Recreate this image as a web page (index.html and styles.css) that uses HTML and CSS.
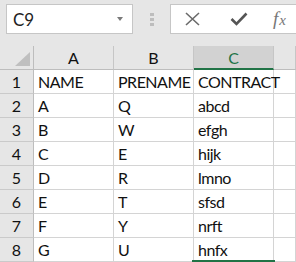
FILE: index.html
```html
<!DOCTYPE html>
<html lang="en">
  <head>
    <meta charset="UTF-8" />
    <title>Sheet</title>
    <link rel="stylesheet" href="styles.css">
  </head>
  <body>
    <div class="toolbar">
      <div class="namebox">
        <span class="ref">C9</span>
        <span class="caret"></span>
      </div>
      <div class="grip"><i></i><i></i><i></i></div>
      <div class="formula">
        <svg class="cancel" width="15" height="14" viewBox="0 0 15 14">
          <path d="M1 1 L14 13 M14 1 L1 13" stroke="#6a6a6a" stroke-width="1.6" fill="none" />
        </svg>
        <svg class="enter" width="18" height="14" viewBox="0 0 18 14">
          <path d="M1.5 7 L6.5 12 L16.5 1.5" stroke="#555" stroke-width="2.6" fill="none" />
        </svg>
        <span class="fx">f<span class="x">x</span></span>
      </div>
    </div>

    <div class="sheet">
      <div class="corner"><span class="tri"></span></div>
      <div class="col">A</div>
      <div class="col">B</div>
      <div class="col active">C</div>
      <div class="col"></div>

      <div class="row">1</div>
      <div class="cell">NAME</div>
      <div class="cell">PRENAME</div>
      <div class="cell">CONTRACT</div>
      <div class="cell"></div>

      <div class="row">2</div>
      <div class="cell">A</div>
      <div class="cell">Q</div>
      <div class="cell">abcd</div>
      <div class="cell"></div>

      <div class="row">3</div>
      <div class="cell">B</div>
      <div class="cell">W</div>
      <div class="cell">efgh</div>
      <div class="cell"></div>

      <div class="row">4</div>
      <div class="cell">C</div>
      <div class="cell">E</div>
      <div class="cell">hijk</div>
      <div class="cell"></div>

      <div class="row">5</div>
      <div class="cell">D</div>
      <div class="cell">R</div>
      <div class="cell">lmno</div>
      <div class="cell"></div>

      <div class="row">6</div>
      <div class="cell">E</div>
      <div class="cell">T</div>
      <div class="cell">sfsd</div>
      <div class="cell"></div>

      <div class="row">7</div>
      <div class="cell">F</div>
      <div class="cell">Y</div>
      <div class="cell">nrft</div>
      <div class="cell"></div>

      <div class="row">8</div>
      <div class="cell">G</div>
      <div class="cell">U</div>
      <div class="cell above-selected">hnfx</div>
      <div class="cell"></div>
    </div>
  </body>
</html>
```

FILE: styles.css
```css
* {
  margin: 0;
  padding: 0;
  box-sizing: border-box;
}

body {
  font-family: Lato, "Liberation Sans", Arial, sans-serif;
  font-size: 16px;
  color: #111;
  background-color: #e6e6e6;
  width: 296px;
  height: 262px;
  overflow: hidden;
}

/* name box + formula bar */
.toolbar {
  display: flex;
  align-items: flex-start;
  height: 46px;
  padding: 4px 0 0 6px;
}

.namebox {
  display: flex;
  align-items: center;
  justify-content: space-between;
  width: 127px;
  height: 30px;
  padding: 0 9px 0 6px;
  background-color: #fff;
  border: 1px solid #c6c6c6;
}

.ref {
  color: #222;
  font-size: 17px;
  padding-top: 1px;
}

.caret {
  width: 0;
  height: 0;
  border-top: 4px solid #7a7a7a;
  border-left: 3.5px solid transparent;
  border-right: 3.5px solid transparent;
}

.grip {
  display: flex;
  flex-direction: column;
  justify-content: center;
  gap: 2px;
  height: 30px;
  margin-left: 17px;
}

.grip i {
  display: block;
  width: 4px;
  height: 3px;
  background-color: #bdbdbd;
}

.formula {
  display: flex;
  flex: 1;
  align-items: center;
  height: 30px;
  margin-left: 16px;
  padding-left: 14px;
  background-color: #fff;
  border: 1px solid #c6c6c6;
  border-right: none;
}

.enter {
  margin-left: 30px;
}

.fx {
  margin-left: 25px;
  font-family: "Liberation Serif", "Times New Roman", serif;
  font-style: italic;
  font-size: 19px;
  color: #777;
}

.fx .x {
  font-size: 15px;
  margin-left: 1px;
}

/* grid */
.sheet {
  display: grid;
  grid-template-columns: 34px 80px 80px 80px 1fr;
  grid-auto-rows: 24px;
  background-color: #fff;
}

.sheet > div {
  display: flex;
  align-items: flex-end;
  line-height: 16px;
  padding-bottom: 3px;
  border-right: 1px solid #d4d4d4;
  border-bottom: 1px solid #d4d4d4;
}

.cell {
  padding-left: 4px;
  letter-spacing: -0.5px;
  white-space: nowrap;
}

.sheet > .corner {
  justify-content: flex-end;
  padding: 0 3px 3px 0;
  background-color: #e6e6e6;
  border-right-color: #bdbdbd;
  border-bottom-color: #bdbdbd;
}

.tri {
  width: 0;
  height: 0;
  border-left: 15px solid transparent;
  border-bottom: 14px solid #bfbfbf;
}

.sheet > .col {
  justify-content: center;
  background-color: #e6e6e6;
  border-right-color: #c6c6c6;
  border-bottom-color: #bdbdbd;
}

.sheet > .col.active {
  background-color: #d2d2d2;
  color: #217346;
  border-bottom: 2px solid #217346;
  padding-bottom: 2px;
}

.sheet > .row {
  justify-content: center;
  background-color: #e6e6e6;
  border-right-color: #bdbdbd;
  border-bottom-color: #cacaca;
}

/* top edge of the selected C9 frame */
.above-selected {
  position: relative;
}

.above-selected::after {
  content: "";
  position: absolute;
  bottom: -1px;
  left: -2px;
  right: -2px;
  height: 2px;
  background-color: #217346;
}
```
